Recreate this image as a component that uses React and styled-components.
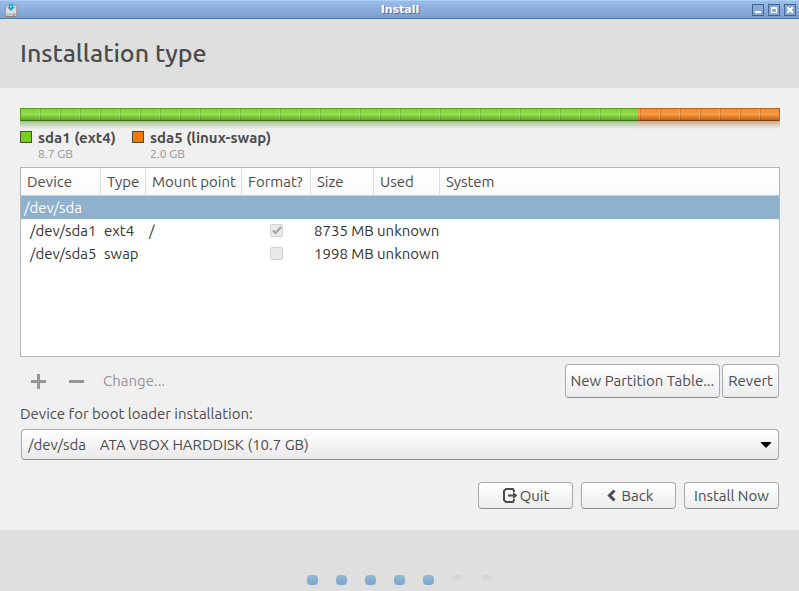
import React from "react";
import styled, { createGlobalStyle } from "styled-components";

const GlobalStyle = createGlobalStyle`
  * { box-sizing: border-box; }
  html, body, #root { height: 100%; }
  body {
    margin: 0;
    background: #f0f0f0;
    color: #4c4c4c;
    font-family: "Ubuntu", "Noto Sans", sans-serif;
    font-size: 15px;
    line-height: 20px;
  }
  button, select { font: inherit; color: inherit; }
`;

const Window = styled.div`
  display: flex;
  flex-direction: column;
  min-height: 100%;
`;

const TitleBar = styled.header`
  display: grid;
  grid-template-columns: 1fr auto 1fr;
  align-items: center;
  height: 19px;
  padding: 0 3px 0 4px;
  border-top: 1px solid #a8d0fb;
  border-bottom: 1px solid #4a76b0;
  background: linear-gradient(#9cbce6, #7a9ed0);
`;

const AppIcon = styled.svg`
  display: block;
  width: 14px;
  height: 14px;
`;

const WindowTitle = styled.span`
  color: #fff;
  font: bold 11px/16px "DejaVu Sans", sans-serif;
  text-shadow: 1px 1px 0 #5b7196;
`;

const WindowControls = styled.div`
  display: flex;
  justify-content: flex-end;
  gap: 4px;
`;

const WindowButton = styled.button`
  display: block;
  width: 12px;
  height: 12px;
  padding: 0;
  border: 1px solid #41658f;
  background: #86a9d8;

  svg { display: block; width: 10px; height: 10px; }
`;

const PageHeader = styled.div`
  padding: 16px 20px 17px;
  background: #dfdfdf;
`;

const PageTitle = styled.h1`
  margin: 0;
  font-size: 25px;
  font-weight: 500;
  line-height: 36px;
`;

const Main = styled.main`
  flex: 1;
  display: flex;
  flex-direction: column;
  padding: 20px 19px 21px 20px;
`;

const DiskBar = styled.div`
  display: grid;
  grid-template-columns: ${(p) => p.$columns};
`;

const Segment = styled.div`
  height: 13px;
  border: solid ${(p) => p.$edge};
  border-width: 1px ${(p) => (p.$last ? "1px" : "0")} 0 ${(p) => (p.$first ? "1px" : "0")};
  background:
    linear-gradient(transparent 11px, ${(p) => p.$dark} 11px),
    repeating-linear-gradient(
      90deg,
      transparent 0 ${(p) => p.$tick}px,
      rgba(255, 255, 255, 0.16) ${(p) => p.$tick}px ${(p) => p.$tick + 1}px,
      rgba(0, 0, 0, 0.13) ${(p) => p.$tick + 1}px ${(p) => p.$tick + 2}px,
      transparent ${(p) => p.$tick + 2}px 20px
    ),
    linear-gradient(${(p) => p.$fill});
`;

const Reflection = styled.div`
  height: 8px;
  background: linear-gradient(${(p) => p.$shade}, transparent);
  opacity: 0.6;
`;

const Legend = styled.ul`
  display: flex;
  gap: 16px;
  margin: 0;
  padding: 0;
  list-style: none;
`;

const LegendItem = styled.li`
  display: grid;
  grid-template-columns: 12px auto;
  column-gap: 6px;
`;

const Swatch = styled.span`
  width: 12px;
  height: 12px;
  margin-top: 2px;
  border: 1px solid #4c4c3a;
  background: ${(p) => p.$color};
`;

const PartitionName = styled.span`
  font-weight: 700;
  line-height: 18px;
`;

const PartitionSize = styled.span`
  grid-column: 2;
  color: #949494;
  font-size: 12px;
  line-height: 14px;
`;

const TableFrame = styled.div`
  flex: 1;
  min-height: 140px;
  margin-top: 6px;
  border: 1px solid #b6b6b6;
  background: #fff;
`;

const PartitionTable = styled.table`
  width: 100%;
  border-collapse: separate;
  border-spacing: 0;
  table-layout: fixed;
`;

const Col = styled.col`
  width: ${(p) => p.$width};
`;

const HeadCell = styled.th`
  height: 28px;
  padding: 0 0 0 6px;
  border-right: ${(p) => (p.$last ? "0" : "1px solid #dedede")};
  border-bottom: 1px solid #d0d0d0;
  background: linear-gradient(#fff, #f9f9f9);
  font-weight: 400;
  text-align: left;
  white-space: nowrap;
`;

const Row = styled.tr`
  background: ${(p) => (p.$selected ? "#8fb1ce" : "#fff")};
  color: ${(p) => (p.$selected ? "#fff" : "#333")};
`;

const Cell = styled.td`
  height: 23px;
  padding: 0 0 0 ${(p) => p.$inset ?? 3}px;
  line-height: 22px;
  white-space: nowrap;
`;

const CheckBox = styled.span`
  display: grid;
  width: 13px;
  height: 13px;
  margin: 0 auto;

  > * { grid-area: 1 / 1; }
  svg { width: 13px; height: 13px; pointer-events: none; }
`;

const CheckInput = styled.input`
  appearance: none;
  width: 13px;
  height: 13px;
  margin: 0;
  border: 1px solid #d2d2d2;
  border-radius: 2px;
  background: #e9e9e9;
`;

const Toolbar = styled.div`
  display: flex;
  align-items: center;
  gap: 2px;
  margin: 7px 1px 0 0;
`;

const FlatButton = styled.button`
  display: flex;
  align-items: center;
  height: 34px;
  padding: 0 ${(p) => (p.$text ? "7px" : "10px")};
  border: 0;
  background: none;

  &:disabled { color: #969696; }
  svg { width: 16px; height: 16px; }
`;

const Spacer = styled.span`
  flex: 1;
`;

const Button = styled.button`
  display: flex;
  align-items: center;
  justify-content: center;
  gap: 2px;
  min-width: ${(p) => (p.$wide ? "95px" : "0")};
  height: ${(p) => (p.$tall ? "34px" : "27px")};
  padding: 0 5px;
  border: 1px solid #aaa;
  border-bottom-color: #909090;
  border-radius: 4px;
  background: linear-gradient(#fff, #ececec);
  white-space: nowrap;

  svg { width: 16px; height: 16px; }
`;

const FieldLabel = styled.label`
  margin-top: 5px;
  line-height: 22px;
`;

const SelectBox = styled.div`
  display: grid;
  align-items: center;
  margin: 4px 1px 0;

  > * { grid-area: 1 / 1; }
  svg {
    justify-self: end;
    width: 10px;
    height: 6px;
    margin-right: 8px;
    pointer-events: none;
  }
`;

const Select = styled.select`
  appearance: none;
  width: 100%;
  height: 31px;
  padding: 0 24px 0 6px;
  border: 1px solid #aaa;
  border-bottom-color: #909090;
  border-radius: 4px;
  background: linear-gradient(#fff, #e9e9e9);
`;

const Actions = styled.div`
  display: flex;
  justify-content: flex-end;
  gap: 8px;
  margin: 22px 1px 0;
`;

const Footer = styled.footer`
  display: flex;
  align-items: flex-end;
  justify-content: center;
  gap: 18px;
  height: 61px;
  padding-bottom: 6px;
  background: #dfdfdf;
`;

const StepDot = styled.span`
  width: 11px;
  height: 10px;
  border-radius: 4px;
  background: ${(p) =>
    p.$done ? "linear-gradient(#97bbd9, #7ba2c8)" : "linear-gradient(#d0d0d0, #e6e6e6)"};
`;

const partitions = [
  {
    name: "sda1", fs: "ext4", type: "ext4", mount: "/", format: true, size: "8735 MB", capacity: "8.7 GB",
    color: "#73d216", edge: "#55a01a", dark: "#39700f", shade: "#6f9b4c", tick: 18,
    fill: "#7fd236, #97e152 45%, #82c942 60%, #5b9a26",
  },
  {
    name: "sda5", fs: "linux-swap", type: "swap", mount: "", format: false, size: "1998 MB", capacity: "2.0 GB",
    color: "#f57900", edge: "#b5651d", dark: "#7c430c", shade: "#b07a48", tick: 1,
    fill: "#f58a2a, #fa9c46 45%, #e5862f 60%, #ad5f18",
  },
];

const columns = [
  ["Device", "80px"], ["Type", "45px"], ["Mount point", "96px"], ["Format?", "69px"],
  ["Size", "63px"], ["Used", "66px"], ["System", "auto"],
];

function FormatCheck({ checked, name }) {
  return (
    <CheckBox>
      <CheckInput type="checkbox" checked={checked} disabled readOnly aria-label={`Format ${name}`} />
      {checked && (
        <svg viewBox="0 0 13 13" fill="none" stroke="#a2a2a2" strokeWidth="2" aria-hidden="true">
          <path d="M3 6.5 5.5 9 11 3" />
        </svg>
      )}
    </CheckBox>
  );
}

export default function App() {
  return (
    <>
      <GlobalStyle />
      <Window>
        <TitleBar>
          <AppIcon viewBox="0 0 14 14" aria-hidden="true">
            <path d="M1.500 2.500h11v11h-11z" fill="#dcdcda" stroke="#a09f9b" />
            <path d="M2 10h10v3H2z" fill="#c6c6c3" />
            <path d="M2 13.500h10" stroke="#85847f" />
            <path d="M9 12h2" stroke="#858582" />
            <path d="M5 1h4v3h2L7 8 3 4h2z" fill="#25a5cb" />
            <path d="M6 2h2v3H6z" fill="#54cbe6" />
          </AppIcon>
          <WindowTitle>Install</WindowTitle>
          <WindowControls>
            <WindowButton aria-label="Minimize">
              <svg viewBox="0 0 10 10"><path d="M2 6h6v2H2z" fill="#fff" /></svg>
            </WindowButton>
            <WindowButton aria-label="Maximize">
              <svg viewBox="0 0 10 10"><path d="M2 2h6v6H2zM3 4v3h4V4z" fill="#fff" fillRule="evenodd" /></svg>
            </WindowButton>
            <WindowButton aria-label="Close">
              <svg viewBox="0 0 10 10">
                <path d="M2 2h2v1h2V2h2v2H7v2h1v2H6V7H4v1H2V6h1V4H2z" fill="#fff" />
              </svg>
            </WindowButton>
          </WindowControls>
        </TitleBar>

        <PageHeader>
          <PageTitle>Installation type</PageTitle>
        </PageHeader>

        <Main>
          <DiskBar $columns="618fr 142fr">
            {partitions.map((p, i) => (
              <Segment
                key={p.name}
                $edge={p.edge}
                $dark={p.dark}
                $fill={p.fill}
                $tick={p.tick}
                $first={i === 0}
                $last={i === partitions.length - 1}
              />
            ))}
            {partitions.map((p) => <Reflection key={p.name} $shade={p.shade} />)}
          </DiskBar>
          <Legend>
            {partitions.map((p) => (
              <LegendItem key={p.name}>
                <Swatch $color={p.color} />
                <PartitionName>{`${p.name} (${p.fs})`}</PartitionName>
                <PartitionSize>{p.capacity}</PartitionSize>
              </LegendItem>
            ))}
          </Legend>

          <TableFrame>
            <PartitionTable>
              <colgroup>
                {columns.map(([label, width]) => <Col key={label} $width={width} />)}
              </colgroup>
              <thead>
                <tr>
                  {columns.map(([label], i) => (
                    <HeadCell key={label} scope="col" $last={i === columns.length - 1}>{label}</HeadCell>
                  ))}
                </tr>
              </thead>
              <tbody>
                <Row $selected>
                  <Cell colSpan={7}>/dev/sda</Cell>
                </Row>
                {partitions.map((p) => (
                  <Row key={p.name}>
                    <Cell $inset={9}>{`/dev/${p.name}`}</Cell>
                    <Cell>{p.type}</Cell>
                    <Cell>{p.mount}</Cell>
                    <Cell $inset={0}><FormatCheck checked={p.format} name={p.name} /></Cell>
                    <Cell>{p.size}</Cell>
                    <Cell>unknown</Cell>
                    <Cell />
                  </Row>
                ))}
              </tbody>
            </PartitionTable>
          </TableFrame>

          <Toolbar>
            <FlatButton disabled aria-label="Add partition">
              <svg viewBox="0 0 16 16" stroke="#969696" strokeWidth="3" aria-hidden="true">
                <path d="M1 8.500h15M8.500 1v15" />
              </svg>
            </FlatButton>
            <FlatButton disabled aria-label="Remove partition">
              <svg viewBox="0 0 16 16" stroke="#969696" strokeWidth="3" aria-hidden="true">
                <path d="M1 8.500h15" />
              </svg>
            </FlatButton>
            <FlatButton $text disabled>Change...</FlatButton>
            <Spacer />
            <Button $tall>New Partition Table...</Button>
            <Button $tall>Revert</Button>
          </Toolbar>

          <FieldLabel htmlFor="boot-device">Device for boot loader installation:</FieldLabel>
          <SelectBox>
            <Select id="boot-device">
              <option>{"/dev/sda\u00a0\u00a0\u00a0\u00a0ATA VBOX HARDDISK (10.7 GB)"}</option>
            </Select>
            <svg viewBox="0 0 10 6" aria-hidden="true"><path d="M0 0h10v1L5 6 0 1z" fill="#000" /></svg>
          </SelectBox>

          <Actions>
            <Button $wide>
              <svg viewBox="0 0 16 16" fill="none" stroke="#4c4c4c" strokeWidth="2" aria-hidden="true">
                <path d="M12 4V3l-1-2H4L2 3v9l2 2h7l1-2v-1" />
                <path d="M6 7.500h7" />
                <path d="M11 4l4.500 3.500L11 11z" fill="#4c4c4c" stroke="none" />
              </svg>
              Quit
            </Button>
            <Button $wide>
              <svg viewBox="0 0 16 16" fill="none" stroke="#4c4c4c" strokeWidth="3" aria-hidden="true">
                <path d="M10.500 2.500 5.500 7.500l5 5" />
              </svg>
              Back
            </Button>
            <Button $wide>Install Now</Button>
          </Actions>
        </Main>

        <Footer aria-label="Step 5 of 7">
          {[1, 2, 3, 4, 5, 6, 7].map((n) => <StepDot key={n} $done={n <= 5} />)}
        </Footer>
      </Window>
    </>
  );
}
